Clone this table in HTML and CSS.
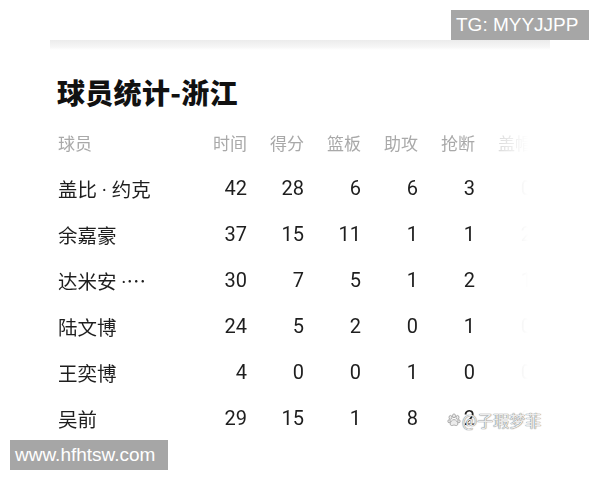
FILE: index.html
```html
<!DOCTYPE html>
<html lang="zh">
<head>
<meta charset="utf-8">
<link rel="stylesheet" href="styles.css">
</head>
<body>
<div class="page">
  <div class="card">
    <div class="topbar"></div>
    <h1 class="title">球员统计-浙江</h1>
    <div class="table">
      <div class="row head">
        <span class="name">球员</span><span>时间</span><span>得分</span><span>篮板</span><span>助攻</span><span>抢断</span><span class="faded">盖帽</span>
      </div>
      <div class="row">
        <span class="name">盖比 · 约克</span><span>42</span><span>28</span><span>6</span><span>6</span><span>3</span><span class="faded">0</span>
      </div>
      <div class="row">
        <span class="name">余嘉豪</span><span>37</span><span>15</span><span>11</span><span>1</span><span>1</span><span class="faded">2</span>
      </div>
      <div class="row">
        <span class="name">达米安 ·⋯</span><span>30</span><span>7</span><span>5</span><span>1</span><span>2</span><span class="faded">1</span>
      </div>
      <div class="row">
        <span class="name">陆文博</span><span>24</span><span>5</span><span>2</span><span>0</span><span>1</span><span class="faded">0</span>
      </div>
      <div class="row">
        <span class="name">王奕博</span><span>4</span><span>0</span><span>0</span><span>1</span><span>0</span><span class="faded">0</span>
      </div>
      <div class="row">
        <span class="name">吴前</span><span>29</span><span>15</span><span>1</span><span>8</span><span>2</span><span class="faded">0</span>
      </div>
    </div>
  </div>
  <div class="wm">
    <svg class="paw" viewBox="0 0 16 16" width="14" height="14"><g fill="#ececec" stroke="#999" stroke-width="0.9"><ellipse cx="4" cy="5" rx="1.7" ry="2.2"/><ellipse cx="8" cy="3.2" rx="1.7" ry="2.2"/><ellipse cx="12" cy="5" rx="1.7" ry="2.2"/><ellipse cx="2.4" cy="9.4" rx="1.4" ry="1.8"/><ellipse cx="13.6" cy="9.4" rx="1.4" ry="1.8"/><path d="M8 7.5c2.4 0 4.4 3 4.4 5 0 1.6-1.5 2-2.4 1.8-.8-.2-1.3-.5-2-.5s-1.2.3-2 .5c-.9.2-2.4-.2-2.4-1.8 0-2 2-5 4.4-5z"/></g></svg>
    <span>@子瑕梦菲</span>
  </div>
  <div class="badge tg">TG: MYYJJPP</div>
  <div class="badge site">www.hfhtsw.com</div>
</div>
</body>
</html>
```
FILE: styles.css
```css
html, body {
  margin: 0;
  padding: 0;
  background: #ffffff;
}
.page {
  position: relative;
  width: 600px;
  height: 480px;
  overflow: hidden;
  font-family: "Roboto", "Noto Sans CJK SC", sans-serif;
}
.card {
  margin: 40px 0 0 50px;
  width: 500px;
}
.topbar {
  height: 10px;
  background: linear-gradient(to bottom, #ececec, #f6f6f6 70%, #ffffff);
}
.title {
  margin: 24px 0 8px 7px;
  font-family: "Noto Sans CJK SC", sans-serif;
  font-size: 28px;
  line-height: 37px;
  font-weight: 900;
  color: #111;
  letter-spacing: 0.3px;
}
.table {
  margin-left: 8px;
  width: 480px;
  -webkit-mask-image: linear-gradient(to right, #000 436px, transparent 470px);
  mask-image: linear-gradient(to right, #000 436px, transparent 470px);
}
.row {
  display: grid;
  grid-template-columns: 132px repeat(6, 57px);
  height: 46px;
  align-items: center;
  font-size: 20px;
  color: #1e1e1e;
}
.row span {
  text-align: right;
  white-space: nowrap;
}
.row .name {
  text-align: left;
  font-size: 19.5px;
  color: #1e1e1e;
}
.row.head,
.row.head .name {
  font-size: 17px;
  color: #a9a9a9;
}
.row .faded {
  color: #cfcfcf;
}
.row.head .faded {
  color: #d6d6d6;
}
.wm {
  position: absolute;
  left: 447px;
  top: 408px;
  display: flex;
  align-items: center;
  gap: 1px;
  font-family: "Noto Sans CJK SC", sans-serif;
  font-size: 16px;
  color: #ececec;
  text-shadow: 0 0 1px #777, 0 0 1px #777;
}
.badge {
  position: absolute;
  background: #a6a6a6;
  color: #ffffff;
  font-family: "Liberation Sans", Arial, sans-serif;
  font-size: 19px;
  line-height: 30px;
  padding: 0 5px;
  white-space: nowrap;
}
.tg {
  left: 451px;
  top: 10px;
  width: 128px;
}
.site {
  left: 10px;
  top: 440px;
  width: 148px;
}
```
